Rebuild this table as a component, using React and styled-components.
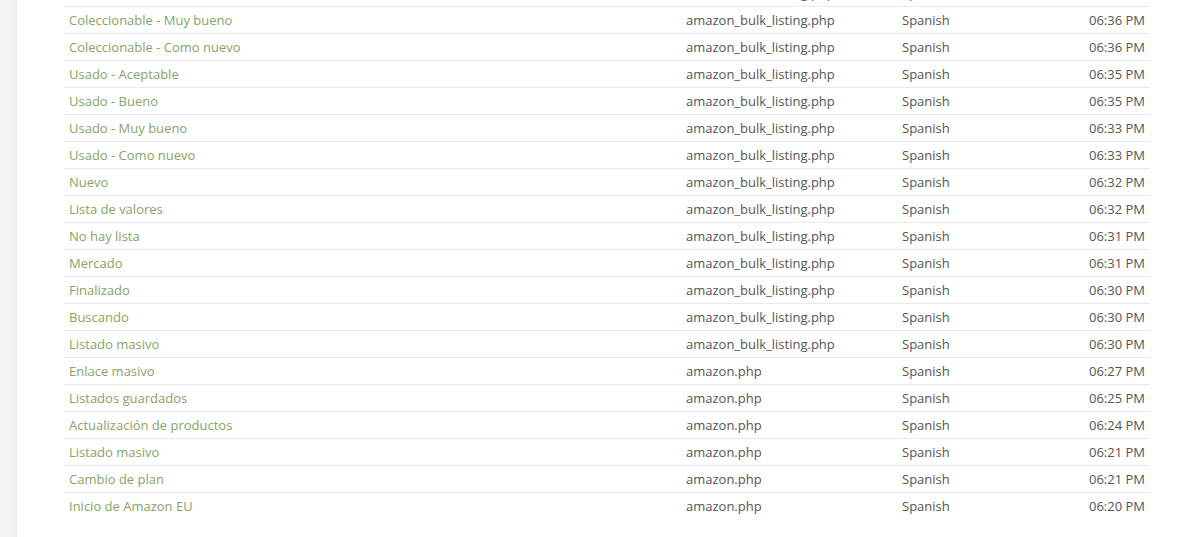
import React from 'react';
import styled, { createGlobalStyle } from 'styled-components';

const GlobalStyle = createGlobalStyle`
  html, body {
    margin: 0;
    padding: 0;
    background: #f3f3f3;
    font-family: "Open Sans", "Liberation Sans", sans-serif;
  }
`;

const rows = [
    ['Coleccionable - Bueno', 'amazon_bulk_listing.php', 'Spanish', '06:37 PM'],
    ['Coleccionable - Muy bueno', 'amazon_bulk_listing.php', 'Spanish', '06:36 PM'],
    ['Coleccionable - Como nuevo', 'amazon_bulk_listing.php', 'Spanish', '06:36 PM'],
    ['Usado - Aceptable', 'amazon_bulk_listing.php', 'Spanish', '06:35 PM'],
    ['Usado - Bueno', 'amazon_bulk_listing.php', 'Spanish', '06:35 PM'],
    ['Usado - Muy bueno', 'amazon_bulk_listing.php', 'Spanish', '06:33 PM'],
    ['Usado - Como nuevo', 'amazon_bulk_listing.php', 'Spanish', '06:33 PM'],
    ['Nuevo', 'amazon_bulk_listing.php', 'Spanish', '06:32 PM'],
    ['Lista de valores', 'amazon_bulk_listing.php', 'Spanish', '06:32 PM'],
    ['No hay lista', 'amazon_bulk_listing.php', 'Spanish', '06:31 PM'],
    ['Mercado', 'amazon_bulk_listing.php', 'Spanish', '06:31 PM'],
    ['Finalizado', 'amazon_bulk_listing.php', 'Spanish', '06:30 PM'],
    ['Buscando', 'amazon_bulk_listing.php', 'Spanish', '06:30 PM'],
    ['Listado masivo', 'amazon_bulk_listing.php', 'Spanish', '06:30 PM'],
    ['Enlace masivo', 'amazon.php', 'Spanish', '06:27 PM'],
    ['Listados guardados', 'amazon.php', 'Spanish', '06:25 PM'],
    ['Actualización de productos', 'amazon.php', 'Spanish', '06:24 PM'],
    ['Listado masivo', 'amazon.php', 'Spanish', '06:21 PM'],
    ['Cambio de plan', 'amazon.php', 'Spanish', '06:21 PM'],
    ['Inicio de Amazon EU', 'amazon.php', 'Spanish', '06:20 PM'],
];

const Page = styled.div`
  height: 537px;
  overflow: hidden;
  padding-left: 17px;
`;

const Panel = styled.div`
  background: #fff;
  min-height: 600px;
  box-shadow: 0 0 7px rgba(0, 0, 0, 0.07);
  padding: 0 29px 0 47px;
  margin-top: -21px;
`;

const Table = styled.table`
  width: 100%;
  border-collapse: collapse;
  table-layout: fixed;
  font-size: 13px;
  color: #555;
`;

const Cell = styled.td`
  padding: 4px 5px;
  line-height: 18px;
  border-top: 1px solid #ebebe6;
  white-space: nowrap;
  text-align: ${p => (p.$right ? 'right' : 'left')};
  color: ${p => (p.$link ? '#86a467' : '#555')};
`;

const App = () => {
    return (
        <Page>
            <GlobalStyle />
            <Panel>
                <Table>
                    <colgroup>
                        <col style={{ width: 617 }} />
                        <col style={{ width: 216 }} />
                        <col style={{ width: 130 }} />
                        <col />
                    </colgroup>
                    <tbody>
                        {rows.map((r, i) => (
                            <tr key={i}>
                                <Cell $link>{r[0]}</Cell>
                                <Cell>{r[1]}</Cell>
                                <Cell>{r[2]}</Cell>
                                <Cell $right>{r[3]}</Cell>
                            </tr>
                        ))}
                    </tbody>
                </Table>
            </Panel>
        </Page>
    );
}

export default App;
